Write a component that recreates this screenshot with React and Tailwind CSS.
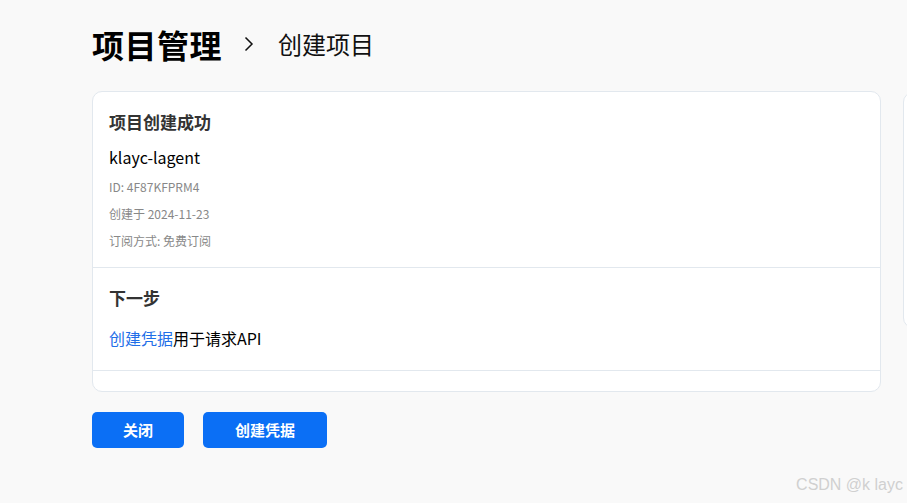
import React from "react";

const font = { fontFamily: '"Noto Sans CJK SC", "Noto Sans", sans-serif' };

const Chevron = () => (
    <svg width="10" height="16" viewBox="0 0 10 16" fill="none" stroke="#111" strokeWidth="1.5">
        <path d="M1.5 1.5 L8 8 L1.5 14.5" />
    </svg>
);

export default function App() {
    return (
        <div className="relative min-h-[503px] w-[907px] overflow-hidden bg-[#f9f9f9] text-black" style={font}>
            <div className="pl-[92px] pt-[20px]">
                <div className="flex h-[48px] items-center">
                    <h1 className="text-[32px] font-bold leading-none tracking-[0.5px]">项目管理</h1>
                    <div className="ml-[22px] mr-[24px] flex items-center">
                        <Chevron />
                    </div>
                    <span className="text-[24px] leading-none text-[#111]">创建项目</span>
                </div>

                <div className="mt-[23px] flex items-start gap-[22px]">
                    <div className="w-[789px] shrink-0 rounded-[10px] border border-[#e2e8ee] bg-white">
                        <div className="border-b border-[#e2e8ee] px-[16px] pt-[18px] pb-[19px]">
                            <h2 className="text-[17px] font-bold leading-[24px] text-[#333]">项目创建成功</h2>
                            <div className="mt-[11px] text-[16px] leading-[24px]">klayc-lagent</div>
                            <div className="mt-[11px] text-[12px] leading-[14px] text-[#888]">ID: 4F87KFPRM4</div>
                            <div className="mt-[13px] text-[12px] leading-[14px] text-[#888]">创建于 2024-11-23</div>
                            <div className="mt-[13px] text-[12px] leading-[14px] text-[#888]">订阅方式: 免费订阅</div>
                        </div>
                        <div className="border-b border-[#e2e8ee] px-[16px] pt-[18px] pb-[20px]">
                            <h2 className="text-[17px] font-bold leading-[24px] text-[#333]">下一步</h2>
                            <div className="mt-[16px] text-[16px] leading-[24px]">
                                <span className="text-[#1f6fe8]">创建凭据</span>用于请求API
                            </div>
                        </div>
                        <div className="h-[20px]" />
                    </div>
                    <div className="mt-[1px] h-[236px] w-[40px] shrink-0 rounded-[10px] border border-[#e2e8ee] bg-white" />
                </div>

                <div className="mt-[20px] flex gap-[19px]">
                    <button className="h-[36px] w-[92px] rounded-[5px] bg-[#0b6ff5] text-[15px] font-bold text-white">关闭</button>
                    <button className="h-[36px] w-[124px] rounded-[5px] bg-[#0b6ff5] text-[15px] font-bold text-white">创建凭据</button>
                </div>
            </div>

            <div className="absolute bottom-[6px] right-[4px] text-[16px] text-[#d0d0d0]" style={{ fontFamily: '"Liberation Sans", sans-serif' }}>
                CSDN @k layc
            </div>
        </div>
    );
}
